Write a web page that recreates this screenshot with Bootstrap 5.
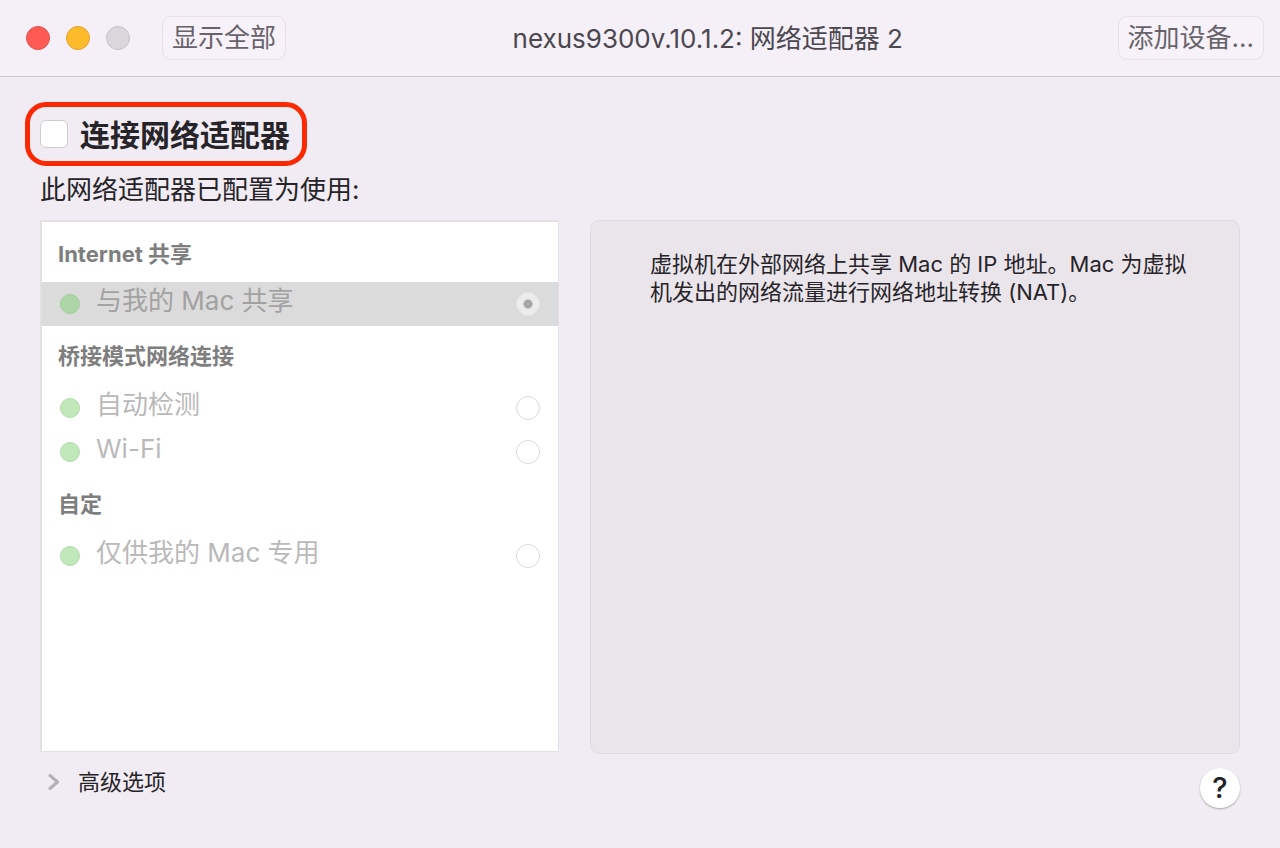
<!DOCTYPE html>
<html lang="zh-CN">
<head>
<meta charset="utf-8">
<meta name="viewport" content="width=device-width, initial-scale=1">
<title>nexus9300v.10.1.2: 网络适配器 2</title>
<link href="https://cdn.jsdelivr.net/npm/bootstrap@5.3.0/dist/css/bootstrap.min.css" rel="stylesheet">
<style>
  body {
    font-family: Inter, "Noto Sans CJK SC", sans-serif;
    background: #f1ecf3;
    color: #262428;
    font-size: 22px;
    line-height: 28px;
  }
  .titlebar {
    min-height: 77px;
    padding: 0 16px 0 26px;
    background: #f5f0f8;
    border-bottom: 1px solid #cdc9d0;
  }
  .window-title { font-size: 26px; line-height: 36px; color: #4b474e; font-weight: 400; margin: 2px 0 0; padding-left: 12px; }
  .light { width: 24px; height: 24px; border-radius: 50%; border: 1px solid; padding: 0; }
  .light-close { background: #ff5b54; border-color: #e2504b; }
  .light-min { background: #fdbb2b; border-color: #dfa32a; }
  .light-off { background: #dad6dc; border-color: #c6c2c8; }
  .tool-btn {
    --bs-btn-padding-x: 9px;
    --bs-btn-padding-y: 0;
    --bs-btn-font-size: 26px;
    --bs-btn-color: #68636a;
    --bs-btn-bg: #f7f2f9;
    --bs-btn-border-color: #e6e0e8;
    --bs-btn-border-radius: 9px;
    --bs-btn-hover-bg: #efe9f1;
    --bs-btn-hover-color: #4b474e;
    white-space: nowrap;
    height: 44px;
    line-height: 40px;
  }
  .page-main { padding: 25px 40px 40px; }
  .connect {
    margin-left: -15px;
    height: 64px;
    padding: 0 12px 0 10px;
    gap: 12px;
    border: 5px solid #fb2a05;
    border-radius: 21px;
  }
  .connect .form-check-input {
    width: 28px; height: 28px; margin: 0;
    border: 1px solid #cfcbd0; border-radius: 6px; background-color: #fff;
  }
  .connect label { font-size: 30px; line-height: 44px; font-weight: 700; padding-top: 2px; }
  .subtitle { font-size: 26px; line-height: 36px; margin: 6px 0 12px; }
  .panels {
    display: grid;
    grid-template-columns: 519fr 650fr;
    gap: 31px;
  }
  .adapter-list { background: #fff; border: 2px solid #e3e0e5; border-width: 2px 1px 1px 2px; }
  .group-title { font-size: 22px; line-height: 28px; font-weight: 700; color: #7e7e7e; margin: 0; padding: 18px 16px 14px; }
  .group-later { padding: 16px; }
  .adapter { height: 44px; padding: 0 18px; gap: 16px; color: #b9b9b9; font-size: 26px; }
  .adapter label { line-height: 36px; padding-bottom: 6px; }
  .adapter.selected { background: #dbdbdb; color: #a2a2a2; }
  .status-dot { width: 20px; height: 20px; border-radius: 50%; background: #c0e8b9; border: 1px solid #b2dbaa; flex: none; }
  .selected .status-dot { background: #acd6a5; border-color: #a3cd9c; }
  .adapter .form-check-input {
    width: 24px; height: 24px; margin: 0;
    border: 1px solid #dadada; background-color: #fff; opacity: 1;
  }
  .adapter .form-check-input:checked {
    border-color: #e3e3e3;
    background: radial-gradient(circle, #a5a5a5 0 4px, #ececec 5px);
  }
  .info {
    background: #eae5eb;
    border: 1px solid #e0dbe2;
    border-radius: 9px;
    padding: 29px 40px 29px 59px;
    margin-bottom: -2px;
  }
  .advanced { color: #262428; gap: 18px; padding: 0 0 0 8px; border: 0; background: none; }
  .help {
    width: 40px; height: 40px; padding: 0; border: 0; border-radius: 50%;
    background: #fff; box-shadow: 0 1px 2px rgba(0,0,0,.3);
    color: #222; font-size: 29px; line-height: 40px; font-weight: 500;
  }
</style>
</head>
<body class="min-vh-100 d-flex flex-column">
<header class="titlebar d-flex align-items-center">
  <div class="d-flex align-items-center gap-3">
    <button class="light light-close" type="button" aria-label="关闭"></button>
    <button class="light light-min" type="button" aria-label="最小化"></button>
    <button class="light light-off" type="button" aria-label="缩放" disabled></button>
    <button class="btn tool-btn ms-3" type="button">显示全部</button>
  </div>
  <h1 class="window-title flex-grow-1 text-center">nexus9300v.10.1.2: 网络适配器 2</h1>
  <button class="btn tool-btn" type="button">添加设备...</button>
</header>

<main class="page-main flex-grow-1 d-flex flex-column">
  <div class="connect d-flex align-items-center align-self-start">
    <input class="form-check-input" type="checkbox" id="connect">
    <label for="connect">连接网络适配器</label>
  </div>
  <p class="subtitle">此网络适配器已配置为使用:</p>

  <div class="panels flex-grow-1">
    <section class="adapter-list">
      <h2 class="group-title">Internet 共享</h2>
      <div class="adapter selected d-flex align-items-center">
        <span class="status-dot"></span>
        <label class="flex-grow-1" for="nat">与我的 Mac 共享</label>
        <input class="form-check-input" type="radio" name="adapter" id="nat" checked disabled>
      </div>
      <h2 class="group-title group-later">桥接模式网络连接</h2>
      <div class="adapter d-flex align-items-center">
        <span class="status-dot"></span>
        <label class="flex-grow-1" for="auto">自动检测</label>
        <input class="form-check-input" type="radio" name="adapter" id="auto" disabled>
      </div>
      <div class="adapter d-flex align-items-center">
        <span class="status-dot"></span>
        <label class="flex-grow-1" for="wifi">Wi-Fi</label>
        <input class="form-check-input" type="radio" name="adapter" id="wifi" disabled>
      </div>
      <h2 class="group-title group-later">自定</h2>
      <div class="adapter d-flex align-items-center">
        <span class="status-dot"></span>
        <label class="flex-grow-1" for="private">仅供我的 Mac 专用</label>
        <input class="form-check-input" type="radio" name="adapter" id="private" disabled>
      </div>
    </section>
    <section class="info">
      <p class="m-0">虚拟机在外部网络上共享 Mac 的 IP 地址。Mac 为虚拟机发出的网络流量进行网络地址转换 (NAT)。</p>
    </section>
  </div>

  <div class="d-flex justify-content-between align-items-start pt-3">
    <button class="advanced d-flex align-items-center" type="button" aria-expanded="false">
      <svg width="12" height="18" viewBox="0 0 12 18" fill="none" stroke="#b3afb5" stroke-width="3" stroke-linecap="round" stroke-linejoin="round" aria-hidden="true"><path d="M2 2.5 9.5 9 2 15.5"/></svg>
      <span>高级选项</span>
    </button>
    <button class="help" type="button" aria-label="帮助">?</button>
  </div>
</main>
<script src="https://cdn.jsdelivr.net/npm/bootstrap@5.3.0/dist/js/bootstrap.bundle.min.js"></script>
</body>
</html>
